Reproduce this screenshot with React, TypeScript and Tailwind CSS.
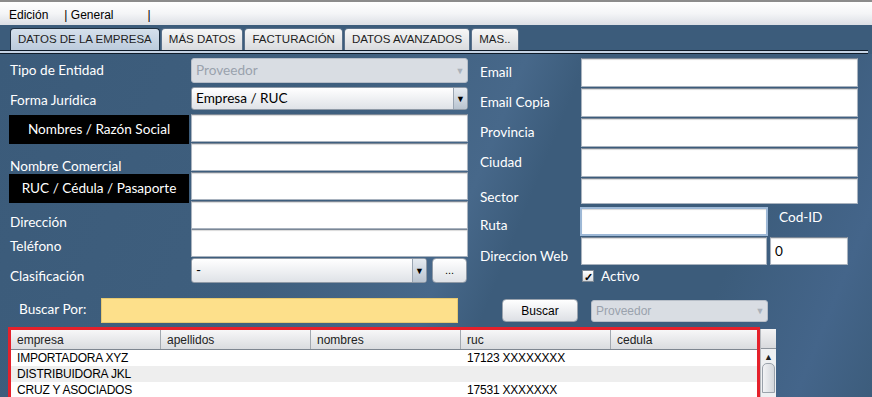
import React from "react";

const lbl = "font-['Lato',sans-serif] text-[13.6px] text-white";

const Input = ({ w, h, value, focus }: { w: string; h: string; value?: string; focus?: boolean }) => (
  <div
    className={`${w} ${h} bg-white border ${
      focus ? "border-[#9db8d6] border-2" : "border-[#a9b3bf] border-t-[#7b8796]"
    } shadow-[inset_0_1px_1px_rgba(0,0,0,0.15)] flex items-center px-[4px] font-['Lato',sans-serif] text-[13.6px] text-black`}
  >
    {value}
  </div>
);

const Combo = ({
  w,
  h,
  value,
  disabled,
  arial,
}: {
  w: string;
  h: string;
  value: string;
  disabled?: boolean;
  arial?: boolean;
}) => (
  <div
    className={`${w} ${h} rounded-[3px] border flex items-stretch overflow-hidden ${
      disabled
        ? "border-[#b7bec8] bg-[#d9dde3] text-[#9aa2ad]"
        : "border-[#8e99a6] bg-[linear-gradient(#ffffff,#dfe2e7)] text-black"
    }`}
  >
    <div
      className={`flex-1 flex items-center px-[4px] ${
        arial ? "font-['Liberation_Sans',sans-serif] text-[12px]" : "font-['Lato',sans-serif] text-[13.6px]"
      }`}
    >
      {value}
    </div>
    <div
      className={`w-[14px] flex items-center justify-center text-[9px] ${
        disabled ? "text-[#aab1ba]" : "border-l border-[#9aa5b2] bg-[linear-gradient(#e6ebf1,#b9c4d0)] text-black"
      }`}
    >
      ▼
    </div>
  </div>
);

const Tab = ({ label, active }: { label: string; active?: boolean }) => (
  <div
    className={`h-[22px] px-[7px] flex items-center border border-b-0 rounded-t-[4px] font-['Liberation_Sans',sans-serif] text-[11.5px] text-[#1e1e1e] ${
      active
        ? "bg-[linear-gradient(#d5e0ec,#bccbdc)] border-[#1f2f40]"
        : "bg-[linear-gradient(#f7f7f7,#d9dbde)] border-[#59708a]"
    }`}
  >
    {label}
  </div>
);

const BlackLabel = ({ text }: { text: string }) => (
  <div className={`w-[180px] h-[29px] bg-black flex items-center justify-center ${lbl}`}>{text}</div>
);

const rows = [
  { empresa: "IMPORTADORA XYZ", ruc: "17123 XXXXXXXX" },
  { empresa: "DISTRIBUIDORA JKL", ruc: "" },
  { empresa: "CRUZ Y ASOCIADOS", ruc: "17531 XXXXXXX" },
];

const cols = [
  { n: "empresa", w: "w-[150px]" },
  { n: "apellidos", w: "w-[150px]" },
  { n: "nombres", w: "w-[150px]" },
  { n: "ruc", w: "w-[150px]" },
  { n: "cedula", w: "flex-1" },
];

export default function App() {
  return (
    <div className="w-[872px] h-[397px] overflow-hidden flex flex-col bg-[#3d5d7c]">
      {/* menu */}
      <div className="h-[25px] shrink-0 border-t-2 border-[#8c8c8c] bg-[linear-gradient(#ffffff,#f4f5f7_50%,#dcdfe5)] flex items-center pt-[3px] font-['Liberation_Sans',sans-serif] text-[12px] text-black">
        <span className="ml-[9px]">Edición</span>
        <span className="ml-[16px]">| General</span>
        <span className="ml-[34px] text-black">|</span>
      </div>

      {/* tabs */}
      <div className="h-[29px] shrink-0 bg-[#3c5c7b] flex flex-col">
        <div className="h-[25px] flex items-end pl-[10px] gap-[1px]">
          <Tab label="DATOS DE LA EMPRESA" active />
          <Tab label="MÁS DATOS" />
          <Tab label="FACTURACIÓN" />
          <Tab label="DATOS AVANZADOS" />
          <Tab label="MAS.." />
        </div>
        <div className="h-[4px] w-[868px] border-y border-[#0f1c2a] bg-[#c5d3e4]" />
      </div>

      {/* body */}
      <div className="flex-1 shrink-0 relative bg-[linear-gradient(112deg,#3b5b7a_0%,#3f5f7e_35%,#47688a_52%,#3c5c7b_58%,#3c5c7b_80%,#44658a_92%,#3c5c7b_100%)]">
        <div className="flex">
          {/* left column */}
          <div className="w-[471px] flex flex-col pt-[4px]">
            <div className="h-[25px] flex items-center">
              <div className={`w-[191px] pl-[10px] ${lbl}`}>Tipo de Entidad</div>
              <Combo w="w-[277px]" h="h-[25px]" value="Proveedor" disabled />
            </div>
            <div className="h-[23px] mt-[4px] flex items-center">
              <div className={`w-[191px] pl-[10px] pt-[3px] ${lbl}`}>Forma Jurídica</div>
              <Combo w="w-[277px]" h="h-[23px]" value="Empresa / RUC" />
            </div>
            <div className="h-[29px] mt-[4px] flex items-start">
              <div className="w-[191px] pl-[9px] pt-[1px]">
                <BlackLabel text="Nombres / Razón Social" />
              </div>
              <Input w="w-[277px]" h="h-[28px]" />
            </div>
            <div className="h-[28px] flex items-start">
              <div className={`w-[191px] pl-[10px] pt-[13px] ${lbl}`}>Nombre Comercial</div>
              <Input w="w-[277px]" h="h-[28px]" />
            </div>
            <div className="h-[29px] mt-[1px] flex items-start">
              <div className="w-[191px] pl-[9px] pt-[2px]">
                <BlackLabel text="RUC / Cédula / Pasaporte" />
              </div>
              <Input w="w-[277px]" h="h-[28px]" />
            </div>
            <div className="h-[28px] flex items-start">
              <div className={`w-[191px] pl-[10px] pt-[11px] ${lbl}`}>Dirección</div>
              <Input w="w-[277px]" h="h-[28px]" />
            </div>
            <div className="h-[28px] flex items-start">
              <div className={`w-[191px] pl-[10px] pt-[7px] ${lbl}`}>Teléfono</div>
              <Input w="w-[277px]" h="h-[28px]" />
            </div>
            <div className="h-[25px] mt-[1px] flex items-start">
              <div className={`w-[191px] pl-[10px] pt-[8px] ${lbl}`}>Clasificación</div>
              <Combo w="w-[236px]" h="h-[25px]" value="-" />
              <div className="ml-[5px] w-[35px] h-[25px] rounded-[4px] border border-[#8e99a6] bg-[linear-gradient(#ffffff,#dfe2e7)] flex items-center justify-center font-['Liberation_Sans',sans-serif] text-[11px] text-black">
                ...
              </div>
            </div>
          </div>

          {/* right column */}
          <div className="w-[380px] ml-[9px] flex flex-col pt-[4px]">
            {["Email", "Email Copia", "Provincia", "Ciudad"].map((l) => (
              <div key={l} className="h-[29px] mb-[1px] flex items-start">
                <div className={`w-[101px] ${lbl} pt-[4px]`}>{l}</div>
                <Input w="w-[277px]" h="h-[29px]" />
              </div>
            ))}
            <div className="h-[26px] flex items-start">
              <div className={`w-[101px] ${lbl} pt-[9px]`}>Sector</div>
              <Input w="w-[277px]" h="h-[26px]" />
            </div>
            <div className="h-[29px] mt-[3px] flex items-start">
              <div className={`w-[100px] ${lbl} pt-[8px]`}>Ruta</div>
              <Input w="w-[188px]" h="h-[29px]" focus />
              <div className={`ml-[11px] ${lbl}`}>Cod-ID</div>
            </div>
            <div className="h-[28px] mt-[1px] flex items-start">
              <div className={`w-[101px] ${lbl} pt-[9px]`}>Direccion Web</div>
              <Input w="w-[186px]" h="h-[28px]" />
              <div className="ml-[3px]">
                <Input w="w-[78px]" h="h-[28px]" value="0" />
              </div>
            </div>
            <div className="h-[16px] mt-[3px] flex items-center pl-[102px]">
              <div className="w-[12px] h-[12px] bg-[linear-gradient(#ffffff,#d5d9de)] border border-[#7d8894] flex items-center justify-center text-[11px] leading-none text-black font-bold">
                ✓
              </div>
              <span className={`ml-[7px] ${lbl}`}>Activo</span>
            </div>
          </div>
        </div>

        {/* search row */}
        <div className="mt-[14px] h-[25px] flex items-center">
          <div className={`w-[101px] pl-[19px] pb-[2px] ${lbl}`}>Buscar Por:</div>
          <div className="w-[357px] h-[25px] bg-[#fde08b] border border-[#e8c96f]" />
          <div className="ml-[44px] w-[76px] h-[23px] rounded-[4px] border border-[#9aa3ae] bg-[linear-gradient(#ffffff,#dde0e5)] flex items-center justify-center font-['Liberation_Sans',sans-serif] text-[12px] text-black">
            Buscar
          </div>
          <div className="ml-[13px]">
            <Combo w="w-[177px]" h="h-[22px]" value="Proveedor" disabled arial />
          </div>
        </div>

        {/* table */}
        <div className="mt-[4px] ml-[8px] flex items-start">
          <div className="w-[752px] h-[80px] border-[3px] border-[#e5212b] bg-white flex flex-col">
            <div className="h-[20px] flex bg-[linear-gradient(#f7f7f8,#dadcdf)] border-b border-[#7e8690]">
              {cols.map((c, i) => (
                <div
                  key={c.n}
                  className={`${c.w} ${i < 4 ? "border-r border-[#a3a9b0]" : ""} pl-[6px] flex items-center font-['Liberation_Sans',sans-serif] text-[12px] text-[#222]`}
                >
                  {c.n}
                </div>
              ))}
            </div>
            {rows.map((r, i) => (
              <div
                key={r.empresa}
                className={`h-[16px] flex items-center font-['Liberation_Sans',sans-serif] text-[12px] tracking-[-0.2px] text-black ${
                  i % 2 ? "bg-[#eeeeee]" : "bg-white"
                }`}
              >
                <div className="w-[450px] pl-[6px]">{r.empresa}</div>
                <div className="pl-[6px]">{r.ruc}</div>
              </div>
            ))}
          </div>
          <div className="w-[16px] h-[80px] mt-[2px] flex flex-col border-l border-[#b5b9be]">
            <div className="h-[20px] bg-[linear-gradient(#f3f3f4,#d8dadd)] border-b border-[#8e959d]" />
            <div className="flex-1 bg-[#eef0f2] flex flex-col items-center pt-[3px]">
              <div className="text-[9px] leading-none text-[#222]">▲</div>
              <div className="mt-[2px] w-[13px] h-[30px] rounded-t-[5px] border border-[#9aa2ab] bg-[linear-gradient(90deg,#f2f3f5,#d3d7dc)]" />
            </div>
          </div>
        </div>
      </div>
    </div>
  );
}
